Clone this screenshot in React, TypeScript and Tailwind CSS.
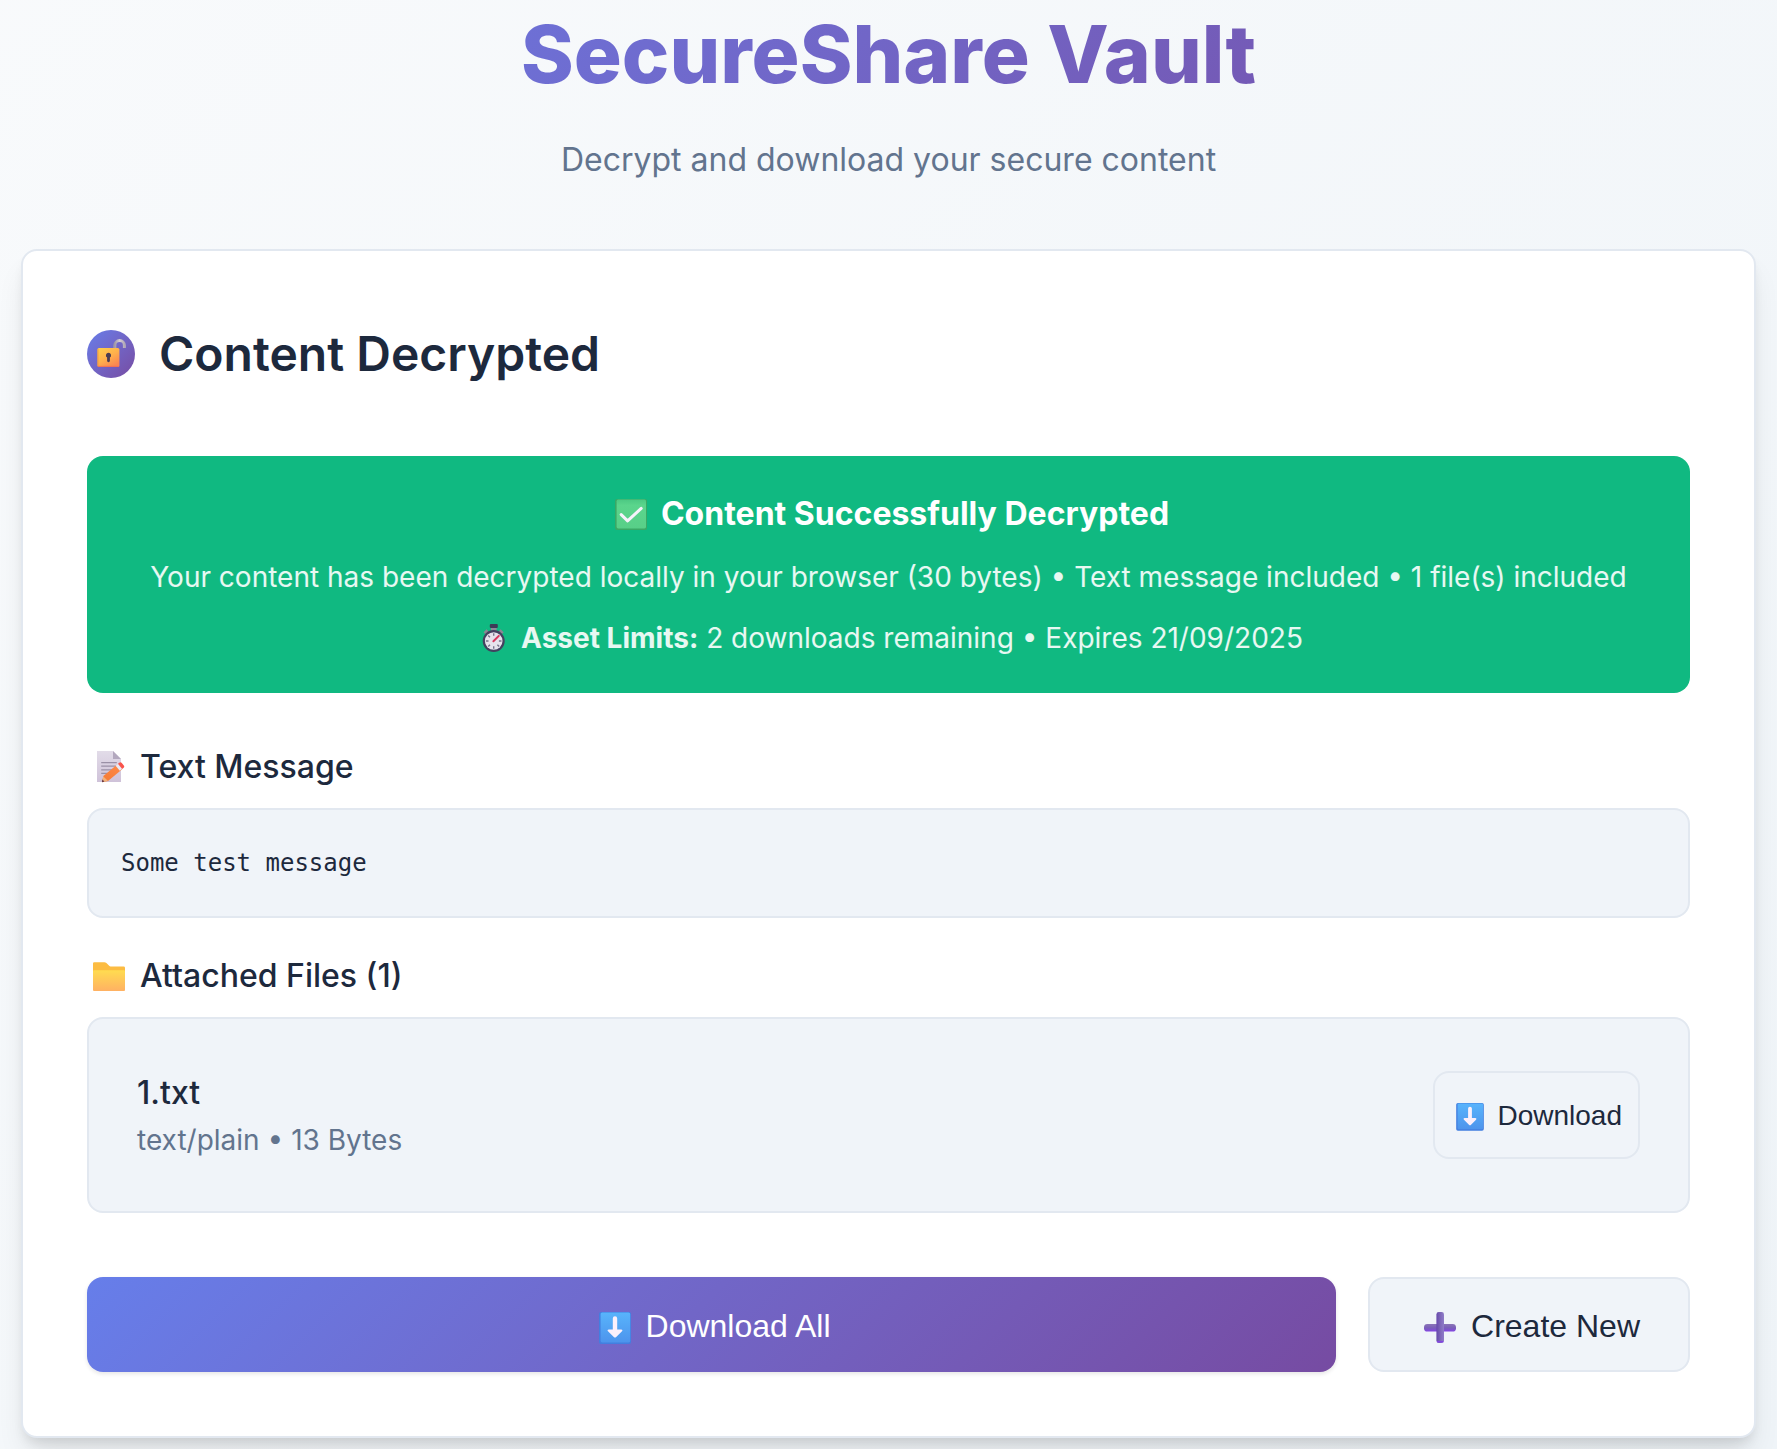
import type { ReactNode } from "react";

const files = [{ name: "1.txt", type: "text/plain", size: "13 Bytes" }];

function App() {
  return (
    <div className="min-h-screen bg-linear-135 from-slate-50 to-[#eff4f8] px-[21px] pt-1.5 pb-[11px] font-[Inter,sans-serif] text-slate-800">
      {/* Header */}
      <header className="mb-16 text-center">
        <h1 className="mb-8 bg-linear-135 from-[#667eea] to-[#764ba2] bg-clip-text text-[80px] leading-[96px] font-extrabold text-transparent">
          SecureShare Vault
        </h1>
        <p className="text-[32px] leading-[51px] text-slate-500">
          Decrypt and download your secure content
        </p>
      </header>

      <main className="rounded-2xl border-2 border-slate-200 bg-white p-16 shadow-[0_20px_30px_-6px_rgba(0,0,0,0.1),0_8px_12px_-4px_rgba(0,0,0,0.1)]">
        <div className="mb-16 flex items-center gap-6">
          <span className="flex size-12 items-center justify-center rounded-full bg-linear-135 from-[#667eea] to-[#764ba2]">
            <UnlockIcon />
          </span>
          <h2 className="text-[48px] leading-[77px] font-semibold">
            Content Decrypted
          </h2>
        </div>

        {/* Status banner */}
        <section className="mb-12 rounded-2xl bg-[#10b981] p-8 text-center text-white">
          <h3 className="mb-4 flex items-center justify-center gap-[9px] text-[32px] leading-[51px] font-bold">
            <CheckIcon />
            Content Successfully Decrypted
          </h3>
          <p className="mb-4 text-[28px] leading-[45px] text-white/90">
            Your content has been decrypted locally in your browser (30 bytes) •
            Text message included • 1 file(s) included
          </p>
          <p className="flex items-center justify-center gap-2 text-[28px] leading-[45px] text-white/90">
            <StopwatchIcon />
            <span>
              <strong className="font-bold">Asset Limits:</strong> 2 downloads
              remaining • Expires 21/09/2025
            </span>
          </p>
        </section>

        {/* Decrypted message */}
        <section className="mb-8">
          <SectionTitle icon={<NoteIcon />}>Text Message</SectionTitle>
          <pre className="rounded-2xl border-2 border-slate-200 bg-[#f0f4f9] p-8 font-['DejaVu_Sans_Mono',monospace] text-[24px] leading-[42px] whitespace-pre-wrap">
            Some test message
          </pre>
        </section>

        {/* Files */}
        <section className="mb-16">
          <SectionTitle icon={<FolderIcon />}>
            Attached Files ({files.length})
          </SectionTitle>
          <ul className="rounded-2xl border-2 border-slate-200 bg-[#f0f4f9] p-12">
            {files.map((file) => (
              <li key={file.name} className="flex items-center justify-between">
                <div>
                  <div className="text-[32px] leading-[51px] font-medium">
                    {file.name}
                  </div>
                  <div className="text-[28px] leading-[45px] text-slate-500">
                    {file.type} • {file.size}
                  </div>
                </div>
                <button
                  type="button"
                  className="flex items-center gap-2 rounded-2xl border-2 border-slate-200 px-4 pt-[21px] pb-[19px] font-['Liberation_Sans',sans-serif] text-[28px] leading-[44px]"
                >
                  <DownArrowIcon className="size-[38px]" />
                  Download
                </button>
              </li>
            ))}
          </ul>
        </section>

        {/* Actions */}
        <div className="flex gap-8">
          <button
            type="button"
            className="flex flex-1 items-center justify-center gap-[9px] rounded-2xl bg-linear-135 from-[#667eea] to-[#764ba2] px-12 pt-6 pb-5 font-['Liberation_Sans',sans-serif] text-[32px] leading-[51px] text-white shadow-[0_2px_4px_rgba(0,0,0,0.1)]"
          >
            <DownArrowIcon className="size-11" />
            Download All
          </button>
          <button
            type="button"
            className="flex items-center justify-center gap-[9px] rounded-2xl border-2 border-slate-200 bg-[#f0f4f9] px-12 pt-[22px] pb-[18px] font-['Liberation_Sans',sans-serif] text-[32px] leading-[51px]"
          >
            <PlusIcon />
            Create New
          </button>
        </div>
      </main>
    </div>
  );
}

function SectionTitle({
  icon,
  children,
}: {
  icon: ReactNode;
  children: ReactNode;
}) {
  return (
    <h3 className="mb-4 flex items-center gap-[9px] text-[32px] leading-[51px] font-medium">
      {icon}
      <span>{children}</span>
    </h3>
  );
}

/* ═══ Icons ═══ */

function UnlockIcon() {
  return (
    <svg viewBox="0 0 48 48" className="size-12" aria-hidden="true">
      <defs>
        <linearGradient id="lock-body" x1="0" y1="0" x2="0.7" y2="1">
          <stop offset="0" stopColor="#ffd04a" />
          <stop offset="0.55" stopColor="#ffb04c" />
          <stop offset="1" stopColor="#fb8650" />
        </linearGradient>
        <linearGradient id="lock-shackle" x1="0" y1="0" x2="1" y2="0">
          <stop offset="0" stopColor="#a098a8" />
          <stop offset="0.5" stopColor="#d6cfd6" />
          <stop offset="1" stopColor="#b3aab8" />
        </linearGradient>
      </defs>
      <path
        d="M27.8 19v-3.600a4.800 4.800 0 0 1 9.600 0V18"
        fill="none"
        stroke="url(#lock-shackle)"
        strokeWidth="3"
      />
      <rect x="10.4" y="18" width="22" height="19" rx="1.6" fill="url(#lock-body)" />
      <path d="M11 36.4h20.6" stroke="#ef6a55" strokeWidth="0.8" />
      <path d="M11 19v17" stroke="#f0953f" strokeWidth="0.8" />
      <path
        d="M21.5 22.8a2.6 2.6 0 0 0-1.4 4.8v3.2a1.4 1.4 0 0 0 2.8 0v-3.2a2.6 2.6 0 0 0-1.4-4.8z"
        fill="#4a3c52"
      />
    </svg>
  );
}

function CheckIcon() {
  return (
    <svg viewBox="0 0 44 44" className="size-11" aria-hidden="true">
      <defs>
        <linearGradient id="check-face" x1="0" y1="0" x2="0" y2="1">
          <stop offset="0" stopColor="#4cc983" />
          <stop offset="0.2" stopColor="#5bd58c" />
          <stop offset="1" stopColor="#58cf88" />
        </linearGradient>
      </defs>
      <rect x="7" y="7" width="32" height="31" rx="2" fill="#3aa865" />
      <rect x="8.6" y="7.6" width="29.4" height="28.8" rx="1.6" fill="url(#check-face)" />
      <path
        d="M13.2 22.6l6.4 6.2L33.2 16.4"
        fill="none"
        stroke="#f6f2fb"
        strokeWidth="3"
        strokeLinecap="round"
        strokeLinejoin="round"
      />
    </svg>
  );
}

function StopwatchIcon() {
  return (
    <svg viewBox="0 0 39 39" className="size-[39px]" aria-hidden="true">
      <path d="M10.6 14.4l3-3M28.6 14.4l-3-3" stroke="#8b8794" strokeWidth="3" />
      <rect x="17" y="8" width="5.6" height="4" fill="#8d8a98" />
      <rect x="15.8" y="5" width="8" height="4" rx="1" fill="#3d3b57" />
      <circle cx="19.7" cy="22" r="11" fill="#43415f" />
      <circle cx="19.7" cy="22" r="8.8" fill="#e6e3ec" />
      <path
        d="M19.7 14.2v2.6M19.7 27.2v2.6M11.9 22h2.6M24.9 22h2.6M14.2 16.5l1.8 1.8M23.4 25.7l1.8 1.8M14.2 27.5l1.8-1.8"
        stroke="#77748a"
        strokeWidth="1.4"
      />
      <path d="M19.4 22.3l5.4-5.4" stroke="#d8385e" strokeWidth="2" strokeLinecap="round" />
    </svg>
  );
}

function NoteIcon() {
  return (
    <svg viewBox="0 0 44 44" className="size-11" aria-hidden="true">
      <defs>
        <linearGradient id="note-page" x1="0" y1="0" x2="0" y2="1">
          <stop offset="0" stopColor="#e2dce8" />
          <stop offset="1" stopColor="#cfc2d9" />
        </linearGradient>
        <linearGradient id="note-pencil" x1="1" y1="0" x2="0" y2="1">
          <stop offset="0" stopColor="#ff8a4a" />
          <stop offset="1" stopColor="#f47a35" />
        </linearGradient>
      </defs>
      <path d="M10 6h16l8 8v23H10z" fill="url(#note-page)" />
      <path d="M26 6l8 8h-8z" fill="#b3a8be" />
      <path
        d="M14.2 17.6h15.6M14.2 21.2h15.6M14.2 24.8h12M14.2 28.4h8"
        stroke="#9a90a6"
        strokeWidth="1.3"
      />
      <path d="M16.4 31l14.4-12 4.4 5.2L21 36l-6 1z" fill="url(#note-pencil)" />
      <path d="M16.2 31.2l4.8 4.8-5.8 1.2z" fill="#f2b27c" />
      <path d="M15.4 34.4l2 2.2-2.4.6z" fill="#5a2f3f" />
      <path d="M28.6 20.8l2.4-2 4.2 5-2.4 2z" fill="#e9eaf6" />
      <path d="M31 18.8l1.2-1a2 2 0 0 1 2.6.2l2 2.4a1.8 1.8 0 0 1-.2 2.4l-1.4 1.2z" fill="#f9544c" />
    </svg>
  );
}

function FolderIcon() {
  return (
    <svg viewBox="0 0 44 44" className="size-11" aria-hidden="true">
      <defs>
        <linearGradient id="folder-front" x1="0" y1="0" x2="0" y2="1">
          <stop offset="0" stopColor="#ffdc50" />
          <stop offset="1" stopColor="#ffb163" />
        </linearGradient>
      </defs>
      <path
        d="M6 9.4A1.2 1.2 0 0 1 7.2 8.2h10.2c.8 0 1.4.2 2 .8l2.8 2.8c.4.4.8.6 1.4.6h13a1.4 1.4 0 0 1 1.4 1.4V20H6z"
        fill="#fcbc42"
      />
      <path d="M6 17.2a1 1 0 0 1 1-1h30a1 1 0 0 1 1 1V36a1 1 0 0 1-1 1H7a1 1 0 0 1-1-1z" fill="url(#folder-front)" />
    </svg>
  );
}

function DownArrowIcon({ className }: { className: string }) {
  return (
    <svg viewBox="0 0 44 44" className={className} aria-hidden="true">
      <defs>
        <linearGradient id="arrow-tile" x1="0" y1="0" x2="0" y2="1">
          <stop offset="0" stopColor="#58b4fc" />
          <stop offset="1" stopColor="#4d94ec" />
        </linearGradient>
      </defs>
      <rect x="6" y="7" width="32" height="32" rx="2" fill="#427fe0" />
      <rect x="7.6" y="7.4" width="29.6" height="30" rx="1.6" fill="url(#arrow-tile)" />
      <path
        d="M19.8 13.400a2.200 2.200 0 0 1 4.400 0v11h4c1.200 0 1.600 1 .8 1.800l-5.800 5.800c-.8.8-1.600.8-2.400 0L15 26.200c-.8-.8-.4-1.800.8-1.800h4z"
        fill="#fbf0fb"
      />
    </svg>
  );
}

function PlusIcon() {
  return (
    <svg viewBox="0 0 44 44" className="size-11" aria-hidden="true">
      <defs>
        <linearGradient id="plus-h" x1="0" y1="0" x2="0" y2="1">
          <stop offset="0" stopColor="#8a74b8" />
          <stop offset="0.5" stopColor="#7a60b8" />
          <stop offset="1" stopColor="#8444e4" />
        </linearGradient>
        <linearGradient id="plus-v" x1="0" y1="0" x2="1" y2="0">
          <stop offset="0" stopColor="#6648ac" />
          <stop offset="0.5" stopColor="#7d66b8" />
          <stop offset="1" stopColor="#8f7cc8" />
        </linearGradient>
      </defs>
      <rect x="6" y="19" width="32" height="7.6" rx="3.4" fill="url(#plus-h)" />
      <rect x="18.4" y="7" width="7.6" height="31" rx="2.4" fill="url(#plus-v)" />
      <path d="M19.6 36.8h5.2" stroke="#8444e4" strokeWidth="1.6" strokeLinecap="round" />
    </svg>
  );
}

export default App;
